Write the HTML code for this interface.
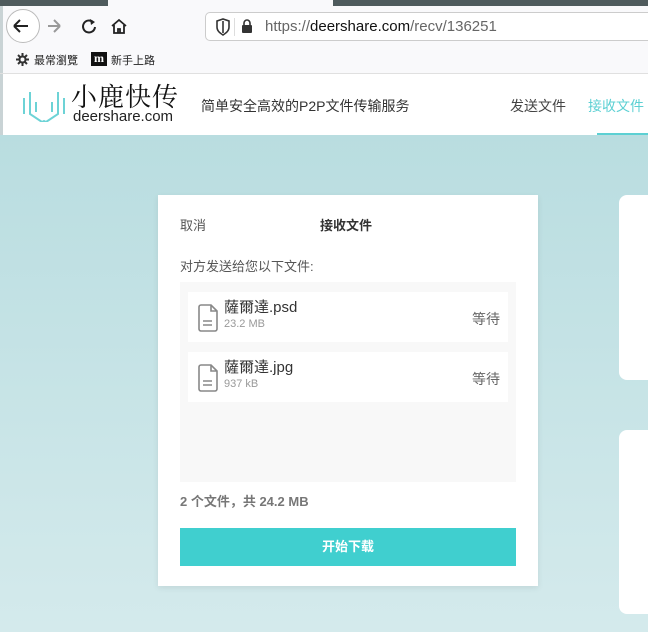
<!DOCTYPE html>
<html><head><meta charset="utf-8"><style>
*{margin:0;padding:0;box-sizing:border-box}
body{width:648px;height:632px;overflow:hidden;position:relative;font-family:"Liberation Sans","Noto Sans CJK SC",sans-serif;background:#fff}
.abs{position:absolute}
</style></head><body>
<div class="abs" style="left:0;top:0;width:648px;height:6px;background:#4f5b5d"></div>
<div class="abs" style="left:108px;top:0;width:225px;height:6px;background:#f9f9fb"></div>
<div class="abs" style="left:0;top:6px;width:648px;height:68px;background:#f9f9fb"></div>
<div class="abs" style="left:0;top:6px;width:3px;height:130px;background:#c9d3d5"></div>
<div class="abs" style="left:6px;top:9px;width:34px;height:34px;border:1px solid #bbb;border-radius:50%;background:#fff"></div>
<svg class="abs" style="left:8px;top:14px" width="120" height="24" viewBox="0 0 120 24">
<path d="M6 12h14M6 12l6-6M6 12l6 6" stroke="#222" stroke-width="2" fill="none"/>
<path d="M40 12h12M52 12l-6-6M52 12l-6 6" stroke="#999" stroke-width="2" fill="none"/>
<path d="M85 8a6 6 0 1 0 2 5" stroke="#222" stroke-width="2" fill="none"/><path d="M82 5l5 3-4 3z" fill="#222"/>
<path d="M104 12l7-6 7 6M106 11v8h10v-8M110 19v-4h2v4" stroke="#222" stroke-width="1.8" fill="none"/>
</svg>
<div class="abs" style="left:205px;top:12px;width:450px;height:29px;border:1px solid #ccc;border-radius:5px;background:#fff"></div>
<svg class="abs" style="left:214px;top:18px" width="40" height="18"><path d="M3 3l6-2 6 2v6c0 4-3 6-6 8-3-2-6-4-6-8z" stroke="#333" stroke-width="1.6" fill="none"/><path d="M9 3v12" stroke="#333" stroke-width="1.6"/><rect x="20" y="-1" width="1" height="20" fill="#ddd"/><rect x="28" y="7" width="10" height="8" rx="1" fill="#333"/><path d="M30 7V5a3 3 0 0 1 6 0v2" stroke="#333" stroke-width="1.6" fill="none"/></svg>
<div class="abs" style="left:265px;top:18px;font-size:15px;color:#666">https://<span style="color:#111">deershare.com</span>/recv/136251</div>
<svg class="abs" style="left:15px;top:52px" width="15" height="15" viewBox="0 0 15 15"><circle cx="7.5" cy="7.5" r="3" fill="none" stroke="#333" stroke-width="2"/><path d="M7.5 1v3M7.5 11v3M1 7.5h3M11 7.5h3M3 3l2 2M10 10l2 2M3 12l2-2M10 5l2-2" stroke="#333" stroke-width="2"/></svg>
<div class="abs" style="left:34px;top:52px;font-size:11px;color:#222">最常瀏覽</div>
<div class="abs" style="left:91px;top:52px;width:16px;height:14px;background:#111;color:#fff;font:bold 12px/13px 'Liberation Serif',serif;text-align:center">m</div>
<div class="abs" style="left:111px;top:52px;font-size:11px;color:#222">新手上路</div>
<div class="abs" style="left:0;top:73px;width:648px;height:1px;background:#e0e0e0"></div>
<div class="abs" style="left:3px;top:74px;width:645px;height:61px;background:#fff"></div>
<svg class="abs" style="left:22px;top:86px" width="44" height="36" viewBox="0 0 44 36"><path d="M2 12v16M8 6v22l12 8M14 16v10M42 12v16M36 6v22l-12 8M30 16v10M20 36l2-1 2 1" stroke="#6dd3d6" stroke-width="2" fill="none"/></svg>
<div class="abs" style="left:71px;top:82px;font-size:26px;line-height:28px;color:#111;letter-spacing:1px;font-family:'Noto Serif CJK SC','Liberation Serif',serif">小鹿快传</div>
<div class="abs" style="left:73px;top:108px;font-size:15px;line-height:17px;color:#222">deershare.com</div>
<div class="abs" style="left:201px;top:96px;font-size:14px;color:#333">简单安全高效的P2P文件传输服务</div>
<div class="abs" style="left:510px;top:96px;font-size:14px;color:#444">发送文件</div>
<div class="abs" style="left:588px;top:96px;font-size:14px;color:#5cd0d3;white-space:nowrap">接收文件</div>
<div class="abs" style="left:597px;top:133px;width:51px;height:2px;background:#5cd0d3"></div>
<div class="abs" style="left:0;top:135px;width:648px;height:497px;background:linear-gradient(#b9dde0,#d4eaec)"></div>
<div class="abs" style="left:158px;top:195px;width:380px;height:391px;background:#fff;box-shadow:0 2px 6px rgba(0,0,0,.08)"></div>
<div class="abs" style="left:180px;top:215px;font-size:13px;color:#555">取消</div>
<div class="abs" style="left:320px;top:215px;font-size:13px;color:#333;font-weight:bold">接收文件</div>
<div class="abs" style="left:180px;top:256px;font-size:13px;color:#555">对方发送给您以下文件:</div>
<div class="abs" style="left:180px;top:282px;width:336px;height:200px;background:#f8f8f8"></div>
<div class="abs" style="left:188px;top:292px;width:320px;height:50px;background:#fff"></div>
<div class="abs" style="left:188px;top:352px;width:320px;height:50px;background:#fff"></div>
<svg class="abs" style="left:197px;top:303px" width="26" height="32"><path d="M2 4a2 2 0 0 1 2-2h10l6 6v18a2 2 0 0 1-2 2H4a2 2 0 0 1-2-2zM14 2v6h6M6 18h9M6 22h9" stroke="#888" stroke-width="1.6" fill="none"/></svg>
<svg class="abs" style="left:197px;top:363px" width="26" height="32"><path d="M2 4a2 2 0 0 1 2-2h10l6 6v18a2 2 0 0 1-2 2H4a2 2 0 0 1-2-2zM14 2v6h6M6 18h9M6 22h9" stroke="#888" stroke-width="1.6" fill="none"/></svg>
<div class="abs" style="left:224px;top:296px;font-size:15px;color:#333">薩爾達.psd</div>
<div class="abs" style="left:224px;top:318px;font-size:11px;color:#999">23.2 MB</div>
<div class="abs" style="left:224px;top:356px;font-size:15px;color:#333">薩爾達.jpg</div>
<div class="abs" style="left:224px;top:378px;font-size:11px;color:#999">937 kB</div>
<div class="abs" style="left:472px;top:309px;font-size:14px;color:#666">等待</div>
<div class="abs" style="left:472px;top:369px;font-size:14px;color:#666">等待</div>
<div class="abs" style="left:180px;top:491px;font-size:13px;color:#777;font-weight:bold">2 个文件，共 24.2 MB</div>
<div class="abs" style="left:180px;top:528px;width:336px;height:38px;background:#40cfcf;color:#fff;font-size:13px;font-weight:bold;text-align:center;line-height:38px">开始下载</div>
<div class="abs" style="left:619px;top:195px;width:40px;height:185px;background:#fff;border-radius:8px"></div>
<div class="abs" style="left:619px;top:430px;width:40px;height:184px;background:#fff;border-radius:8px"></div>
</body></html>
